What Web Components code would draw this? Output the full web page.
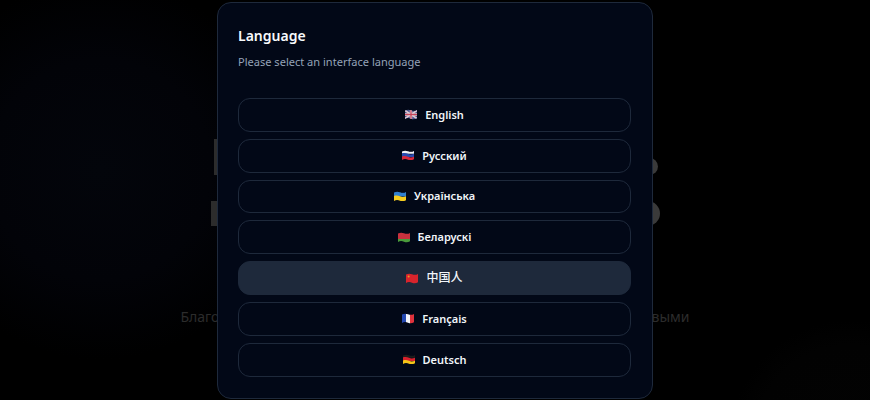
<!DOCTYPE html>
<html><head><meta charset="utf-8">
<style>
html,body{margin:0;height:400px;overflow:hidden;background:#000;font-family:"Noto Sans","Noto Sans CJK SC",sans-serif}
</style></head><body>
<hero-backdrop></hero-backdrop>
<language-dialog heading="Language" description="Please select an interface language">
  <lang-option flag="gb">English</lang-option>
  <lang-option flag="ru">Русский</lang-option>
  <lang-option flag="ua">Українська</lang-option>
  <lang-option flag="by">Беларускі</lang-option>
  <lang-option flag="cn" active>中国人</lang-option>
  <lang-option flag="fr">Français</lang-option>
  <lang-option flag="de">Deutsch</lang-option>
</language-dialog>
<script>
const WAVE='M0 1.6C2 .4 4 .4 6 1.2S10 2.2 12 .9V9.2C10 10.5 8 10.5 6 9.7S2 8.7 0 10Z';
const stripes=(cs)=>{const h=9.2/cs.length;return cs.map((c,i)=>`<path d="M-1 ${.6+i*h}C2 ${-.4+i*h} 4 ${-.2+i*h} 6 ${.7+i*h}S10 ${1.6+i*h} 13 ${.2+i*h}V${.6+(i+1)*h+.2}H-1Z" fill="${c}"/>`).join('')};
const vstripes=(cs)=>{const w=12/cs.length;return cs.map((c,i)=>`<rect x="${i*w}" y="0" width="${w+.05}" height="11" fill="${c}"/>`).join('')};
const FLAGS={
 gb:`<rect width="12" height="11" fill="#4a5590"/><path d="M0 1.5 12 9.5M12 1.5 0 9.5" stroke="#e0c8d0" stroke-width="1.6"/><path d="M6 0V11M0 5.5H12" stroke="#e8e0e4" stroke-width="2.4"/><path d="M6 0V11M0 5.5H12" stroke="#c8445a" stroke-width="1.3"/>`,
 ru:stripes(['#eef0f6','#2a4bb0','#d8283c']),
 ua:stripes(['#2f7fd0','#f5cc1f']),
 by:`<rect width="12" height="7" fill="#c8313e"/><rect y="7" width="12" height="4" fill="#4a9b3c"/>`,
 cn:`<rect width="12" height="11" fill="#d8242c"/><circle cx="2.6" cy="3.4" r="1" fill="#e8a020"/>`,
 fr:vstripes(['#2347b0','#f4f4f8','#e0323c']),
 de:stripes(['#1c1c1c','#d8202c','#f5c518'])
};
let uid=0;
class LangOption extends HTMLElement{
  constructor(){super();
    const id='w'+(++uid);
    const r=this.attachShadow({mode:'open'});
    const a=this.hasAttribute('active');
    r.innerHTML=`<style>
    :host{display:flex;align-items:center;justify-content:center;gap:8px;height:33.8px;box-sizing:border-box;border:1px solid #1e293b;border-radius:12px;background:${a?'#1e293b':'transparent'};color:#f1f5f9;font-size:${a?12:11}px;font-weight:${a?500:600};line-height:16px;cursor:pointer}
    svg{width:12px;height:11px;display:block;flex:none}
    </style><svg viewBox="0 0 12 11" aria-hidden="true"><defs><clipPath id="${id}"><path d="${WAVE}"/></clipPath></defs><g clip-path="url(#${id})">${FLAGS[this.getAttribute('flag')]}</g></svg><slot></slot>`;
  }
}
class LanguageDialog extends HTMLElement{
  constructor(){super();
    const r=this.attachShadow({mode:'open'});
    r.innerHTML=`<style>
    :host{position:absolute;left:217px;top:1.5px;width:435.5px;height:397px;box-sizing:border-box;display:flex;flex-direction:column;padding:19.5px 20.5px 0 20px;background:#020817;border:1px solid #1e293b;border-radius:14px}
    h2{margin:0;font-size:14px;line-height:28px;font-weight:600;color:#f8fafc}
    p{margin:0;font-size:11.05px;line-height:24px;color:#94a3b8}
    .list{display:flex;flex-direction:column;gap:7px;margin-top:24px}
    </style><h2></h2><p></p><div class="list"><slot></slot></div>`;
    r.querySelector('h2').textContent=this.getAttribute('heading');
    r.querySelector('p').textContent=this.getAttribute('description');
  }
}
class HeroBackdrop extends HTMLElement{
  constructor(){super();
    const r=this.attachShadow({mode:'open'});
    r.innerHTML=`<style>
    :host{display:flex;flex-direction:column;align-items:center;height:400px;box-sizing:border-box;padding-top:139px;
      background:radial-gradient(circle at 850px 440px,#030303 0,#020202 95px,transparent 120px),radial-gradient(circle at 100px 170px,#03050b 0,#020308 110px,#000 190px),#000}
    .row{display:flex;justify-content:space-between;align-items:flex-end}
    .a{width:443.7px;height:36px;margin-left:1.6px}.b{width:448.5px;height:25px;margin-top:26px;margin-left:.6px}
    i{display:block;background:#2c2c2c}
    .a i:first-child{width:3px;height:36px}.a i:last-child{width:17px;height:17px;border-radius:50%;background:#3a3a3a}
    .b i:first-child{width:6px;height:25px}.b i:last-child{width:25px;height:25px;border-radius:50%;background:#3a3a3a}
    .t{width:509px;margin-top:80px;font-size:14px;line-height:22px;display:flex;justify-content:space-between;color:#2c2c2c}
    </style><div class="row a"><i></i><i></i></div><div class="row b"><i></i><i></i></div><div class="t"><span>Благо</span><span>выми</span></div>`;
  }
}
customElements.define('lang-option',LangOption);
customElements.define('language-dialog',LanguageDialog);
customElements.define('hero-backdrop',HeroBackdrop);
</script></body></html>
